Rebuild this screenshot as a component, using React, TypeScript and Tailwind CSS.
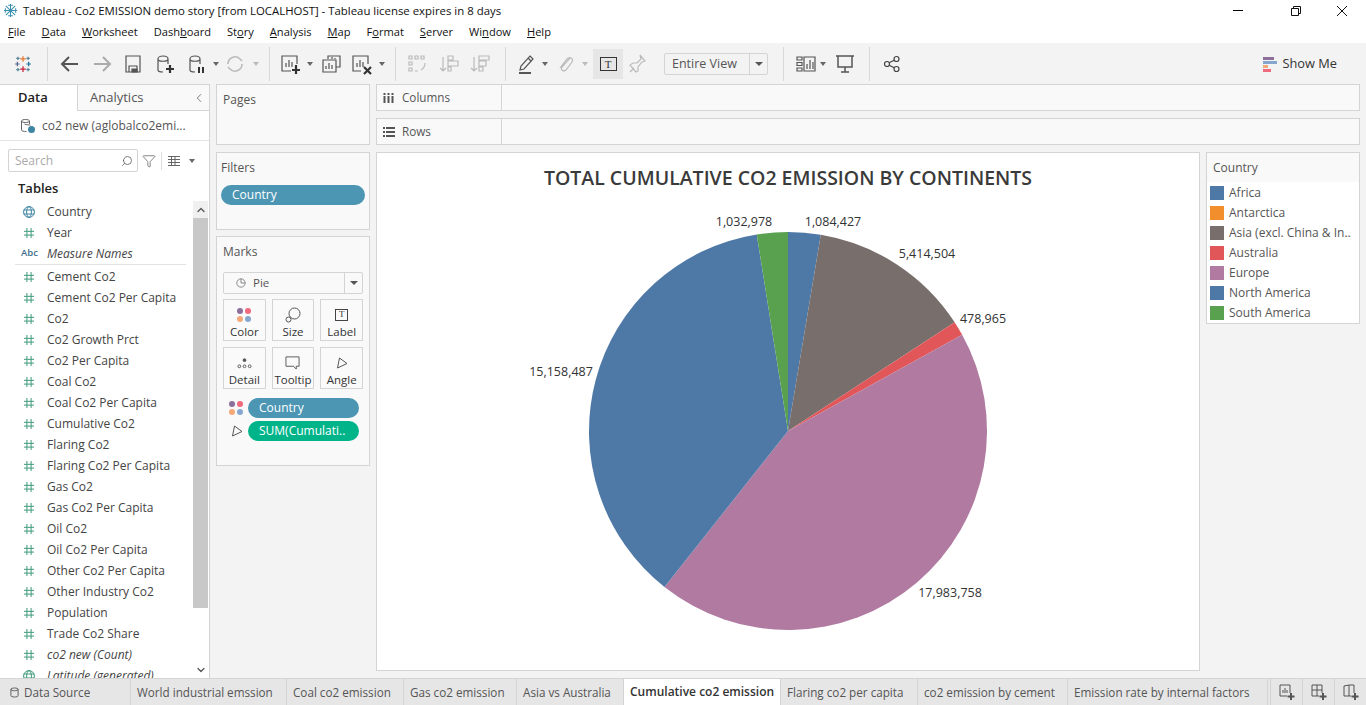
import React from 'react';
import { ChevronLeft, ChevronUp, ChevronDown, Search, Filter } from 'lucide-react';

const FONT = "font-['Open_Sans','Noto_Sans',sans-serif]";

const fields = [
  { name: 'Country', type: 'globe' },
  { name: 'Year', type: 'num' },
  { name: 'Measure Names', type: 'abc', italic: true },
  { divider: true },
  { name: 'Cement Co2', type: 'num' },
  { name: 'Cement Co2 Per Capita', type: 'num' },
  { name: 'Co2', type: 'num' },
  { name: 'Co2 Growth Prct', type: 'num' },
  { name: 'Co2 Per Capita', type: 'num' },
  { name: 'Coal Co2', type: 'num' },
  { name: 'Coal Co2 Per Capita', type: 'num' },
  { name: 'Cumulative Co2', type: 'num' },
  { name: 'Flaring Co2', type: 'num' },
  { name: 'Flaring Co2 Per Capita', type: 'num' },
  { name: 'Gas Co2', type: 'num' },
  { name: 'Gas Co2 Per Capita', type: 'num' },
  { name: 'Oil Co2', type: 'num' },
  { name: 'Oil Co2 Per Capita', type: 'num' },
  { name: 'Other Co2 Per Capita', type: 'num' },
  { name: 'Other Industry Co2', type: 'num' },
  { name: 'Population', type: 'num' },
  { name: 'Trade Co2 Share', type: 'num' },
  { name: 'co2 new (Count)', type: 'num', italic: true },
  { name: 'Latitude (generated)', type: 'globe', italic: true },
];

const legend = [
  { name: 'Africa', color: 'bg-[#4e79a7]' },
  { name: 'Antarctica', color: 'bg-[#f28e2b]' },
  { name: 'Asia (excl. China & In..', color: 'bg-[#786e6b]' },
  { name: 'Australia', color: 'bg-[#e15759]' },
  { name: 'Europe', color: 'bg-[#b07aa1]' },
  { name: 'North America', color: 'bg-[#4e79a7]' },
  { name: 'South America', color: 'bg-[#59a14f]' },
];

const slices = [
  { value: 1084427, color: '#4e79a7' },
  { value: 5414504, color: '#786e6b' },
  { value: 478965, color: '#e15759' },
  { value: 17983758, color: '#b07aa1' },
  { value: 15158487, color: '#4e79a7' },
  { value: 1032978, color: '#59a14f' },
];

const labels = [
  { text: '1,032,978', x: 744, y: 226 },
  { text: '1,084,427', x: 833, y: 226 },
  { text: '5,414,504', x: 927, y: 258 },
  { text: '478,965', x: 983, y: 323 },
  { text: '15,158,487', x: 561, y: 376 },
  { text: '17,983,758', x: 950, y: 597 },
];

const tabs = [
  { name: 'World industrial emssion', w: 'w-[156px]' },
  { name: 'Coal co2 emission', w: 'w-[117px]' },
  { name: 'Gas co2 emission', w: 'w-[113px]' },
  { name: 'Asia vs Australia', w: 'w-[107px]' },
  { name: 'Cumulative co2 emission', w: 'w-[157px]', active: true },
  { name: 'Flaring co2 per capita', w: 'w-[137px]' },
  { name: 'co2 emission by cement', w: 'w-[150px]' },
  { name: 'Emission rate by internal factors', w: 'w-[200px]' },
];

function Pie() {
  const cx = 788 - 377;
  const cy = 431 - 153;
  const r = 199;
  const total = slices.reduce((s, x) => s + x.value, 0);
  let acc = 0;
  return (
    <svg className="absolute left-0 top-0" width="822" height="517" viewBox="0 0 822 517">
      {slices.map((s, i) => {
        const a0 = (acc / total) * Math.PI * 2;
        acc += s.value;
        const a1 = (acc / total) * Math.PI * 2;
        const large = a1 - a0 > Math.PI ? 1 : 0;
        const d = `M${cx} ${cy}L${cx + r * Math.sin(a0)} ${cy - r * Math.cos(a0)}A${r} ${r} 0 ${large} 1 ${cx + r * Math.sin(a1)} ${cy - r * Math.cos(a1)}Z`;
        return <path key={i} d={d} fill={s.color} />;
      })}
      {labels.map((l) => (
        <text key={l.text} x={l.x - 377} y={l.y - 153} textAnchor="middle" fontSize="12.5" fill="#333">
          {l.text}
        </text>
      ))}
    </svg>
  );
}

function Ic({ children, className = '', stroke = '#555' }: { children: React.ReactNode; className?: string; stroke?: string }) {
  return (
    <svg viewBox="0 0 24 24" fill="none" stroke={stroke} strokeWidth="1.2" className={`w-6 h-6 shrink-0 ${className}`}>
      {children}
    </svg>
  );
}

function Caret({ className = '', light = false }: { className?: string; light?: boolean }) {
  return (
    <span className={`w-2 h-6 shrink-0 flex items-center justify-center ${className}`}>
      <span className={`w-0 h-0 border-l-[3.5px] border-r-[3.5px] border-t-[4px] border-l-transparent border-r-transparent ${light ? 'border-t-[#bbb]' : 'border-t-[#666]'}`} />
    </span>
  );
}

function Sep({ className = '' }: { className?: string }) {
  return <span className={`w-px h-[34px] bg-[#d8d8d8] shrink-0 ${className}`} />;
}

function Hash() {
  return (
    <svg viewBox="0 0 12 12" className="w-[10px] h-[10px]" stroke="#3f9a7c" strokeWidth="1.2" fill="none">
      <path d="M3.5 0v12M8.5 0v12M0 4h12M0 8.5h12" />
    </svg>
  );
}

function Globe({ color = '#3f85a3' }: { color?: string }) {
  return (
    <svg viewBox="0 0 12 12" className="w-3 h-3 -ml-px" stroke={color} strokeWidth="1" fill="none">
      <circle cx="6" cy="6" r="5.4" />
      <ellipse cx="6" cy="6" rx="2.4" ry="5.4" />
      <path d="M.6 4h10.8M.6 8h10.8" />
    </svg>
  );
}

function Dots({ className = '' }: { className?: string }) {
  return (
    <span className={`grid grid-cols-2 gap-[2px] w-[14px] shrink-0 ${className}`}>
      <span className="w-[6px] h-[6px] rounded-full bg-[#8d6f9c]" />
      <span className="w-[6px] h-[6px] rounded-full bg-[#f0697c]" />
      <span className="w-[6px] h-[6px] rounded-full bg-[#f5a878]" />
      <span className="w-[6px] h-[6px] rounded-full bg-[#86a6ce]" />
    </span>
  );
}

function AnglePointer({ className = '' }: { className?: string }) {
  return (
    <svg viewBox="0 0 12 12" className={`w-3 h-3 shrink-0 ${className}`} stroke="#555" strokeWidth="1" fill="none">
      <path d="M3.500 1 11 6.500 1.500 11Z" />
    </svg>
  );
}

function MarkBtn({ label, children }: { label: string; children: React.ReactNode }) {
  return (
    <div className="h-[42px] border border-[#d4d4d4] flex flex-col items-center pt-[5px] bg-[#fafafa]">
      <div className="h-[19px] flex items-center justify-center">{children}</div>
      <span className="text-[11.5px] leading-[16px] text-[#333]">{label}</span>
    </div>
  );
}

function Panel({ title, className = '', children }: { title: string; className?: string; children?: React.ReactNode }) {
  return (
    <div className={`border border-[#d4d4d4] bg-[#f9f9f9] px-[6px] ${className}`}>
      <div className="text-[12px] leading-[16px] text-[#555] mt-[7px]">{title}</div>
      {children}
    </div>
  );
}

function Shelf({ label, icon }: { label: string; icon: React.ReactNode }) {
  return (
    <div className="h-[27px] border border-[#d4d4d4] bg-[#f9f9f9] flex items-center">
      <div className="w-[125px] h-full border-r border-[#d4d4d4] flex items-center pl-[6px] gap-[7px] text-[11.7px] text-[#555]">
        {icon}
        {label}
      </div>
    </div>
  );
}

export default function App() {
  return (
    <div className={`h-screen w-full overflow-hidden flex flex-col bg-[#f3f3f3] ${FONT}`}>
      {/* title bar */}
      <div className="h-[21px] bg-white flex items-center shrink-0 relative">
        <svg viewBox="0 0 16 16" className="w-[15px] h-[15px] ml-[3px]" stroke="#3a8fb0" strokeWidth="1.1" fill="none">
          <path d="M8 1v14M1 8h14M3 3l10 10M13 3 3 13M5.5 2.5h5M5.5 13.5h5M2.5 5.5v5M13.5 5.5v5" />
        </svg>
        <span className="ml-[5px] text-[11.4px] text-[#111]">Tableau - Co2 EMISSION demo story [from LOCALHOST] - Tableau license expires in 8 days</span>
        <div className="ml-auto flex items-center">
          <span className="w-[46px] flex justify-center"><span className="w-[10px] h-px bg-black" /></span>
          <svg viewBox="0 0 10 10" className="w-[10px] h-[10px] ml-[30px]" stroke="#111" fill="none"><path d="M.5 2.500h7v7h-7zM2.500 2.500v-2h7v7h-2" /></svg>
          <svg viewBox="0 0 10 10" className="w-[10px] h-[10px] ml-[36px] mr-[19px]" stroke="#111" fill="none"><path d="M0 0l10 10M10 0 0 10" /></svg>
        </div>
      </div>

      {/* menu bar */}
      <div className="h-[22px] bg-white flex items-center shrink-0 text-[11.1px] text-[#111] pl-[8px] gap-[16px]">
        <span><u>F</u>ile</span>
        <span><u>D</u>ata</span>
        <span><u>W</u>orksheet</span>
        <span>Dash<u>b</u>oard</span>
        <span>St<u>o</u>ry</span>
        <span><u>A</u>nalysis</span>
        <span><u>M</u>ap</span>
        <span>F<u>o</u>rmat</span>
        <span><u>S</u>erver</span>
        <span>Wi<u>n</u>dow</span>
        <span><u>H</u>elp</span>
      </div>

      {/* toolbar */}
      <div className="h-[41px] flex items-center shrink-0 pt-px">
        <svg viewBox="0 0 16 16" className="w-[18px] h-[18px] ml-[14px] mr-[15px]" strokeWidth="1.1" fill="none">
          <path d="M8 1v5M5.500 3.500h5" stroke="#e8762d" />
          <path d="M8 10v5M5.500 12.500h5" stroke="#c72037" />
          <path d="M3 6v4M1 8h4" stroke="#5b6591" />
          <path d="M13 6v4M11 8h4" stroke="#1f749e" />
          <path d="M3.500 1.500v3M2 3h3M12.500 1.500v3M11 3h3M3.500 11.500v3M2 13h3M12.500 11.500v3M11 13h3" stroke="#59879b" />
        </svg>
        <Sep />
        <Ic className="ml-[10px]" stroke="#555"><path d="M20 12H4M11 5l-7 7 7 7" strokeWidth="2" /></Ic>
        <Ic className="ml-2" stroke="#aaa"><path d="M4 12h16M13 5l7 7-7 7" strokeWidth="2" /></Ic>
        <Ic className="ml-[7px]"><path d="M5 4h14v16H5zM8 20v-6h8v6" /><path d="M11 17h5v3h-5z" fill="#555" /></Ic>
        <Ic className="ml-2"><path d="M5 7c0-4 10-4 10 0v5M5 7c0 3 10 3 10 0M5 7v11c0 1 2 2 5 2" /><path d="M17 13v8M13 17h8" strokeWidth="2.2" stroke="#333" /></Ic>
        <Ic className="ml-[7px]"><path d="M6 7c0-4 10-4 10 0v5M6 7c0 3 10 3 10 0M6 7v11c0 1 2 2 5 2" /><path d="M15 15v6M19 15v6" strokeWidth="2" stroke="#333" /></Ic>
        <Caret className="ml-1" />
        <Ic className="ml-[3px]" stroke="#bbb"><path d="M5 12a7 7 0 0 1 12-5l2 2M19 12a7 7 0 0 1-12 5l-2-2" strokeWidth="1.6" /></Ic>
        <Caret className="ml-[5px]" light />
        <Sep className="ml-[9px]" />
        <Ic className="ml-2"><path d="M19 12V4H4v15h9M8 15v-4M11 15V8M14 15v-5" /><path d="M18 13v9M14 18h8" strokeWidth="2.2" stroke="#333" /></Ic>
        <Caret className="ml-1" />
        <Ic className="ml-[5px]"><path d="M9 7V4h12v11h-4M4 8h13v12H4zM7 17v-3M10 17v-6M13 17v-4M13 7V5M16 7V6" /></Ic>
        <Ic className="ml-[6px]"><path d="M19 12V4H4v15h8M8 15v-4M11 15V8M14 15v-5" /><path d="m15 15 7 7M22 15l-7 7" strokeWidth="2.2" stroke="#333" /></Ic>
        <Caret className="ml-[5px]" />
        <Sep className="ml-[9px]" />
        <Ic className="ml-[9px]" stroke="#bbb"><path d="M4 4h3v3H4zM10 4h3v3h-3zM16 4h3v3h-3zM4 10h3v3H4zM4 16h3v3H4zM10 19h3M20 11a8 8 0 0 1-4 7" /></Ic>
        <Ic className="ml-[9px]" stroke="#bbb"><path d="M5 5v14M2 16l3 3 3-3M10 4h5v4h-5zM10 9h10v5H10zM10 15h3v4h-3z" /></Ic>
        <Ic className="ml-[7px]" stroke="#bbb"><path d="M5 5v14M2 16l3 3 3-3M10 4h10v4H10zM10 9h7v5h-7zM10 15h4v4h-4z" /></Ic>
        <Sep className="ml-3" />
        <Ic className="ml-[9px]"><path d="M15 4l3 3-9 10-4 1 1-4zM13 6l3 3" /><path d="M4 21h12" strokeWidth="2" stroke="#555" /></Ic>
        <Caret className="ml-[2px]" />
        <Ic className="ml-1" stroke="#bbb"><path d="M17 6 9 15c-2 3 2 5 4 3l6-8c2-3-2-6-5-3l-7 9" /></Ic>
        <Caret className="ml-1" light />
        <span className="ml-1 w-[30px] h-[30px] bg-[#e6e6e6] flex items-center justify-center shrink-0">
          <span className="w-[17px] h-[14px] border border-[#333] flex items-center justify-center font-['Liberation_Serif',serif] text-[11px] leading-none text-[#333]">T</span>
        </span>
        <Ic className="ml-[2px]" stroke="#bbb"><path d="M15 3l5 6-3 1-4 5v4l-2 1-6-7 3-2 4 0 4-4zM9 16l-4 4" /></Ic>
        <div className="ml-[15px] w-[104px] h-[22px] border border-[#d4d4d4] rounded-[2px] flex items-center shrink-0">
          <span className="flex-1 pl-[7px] text-[12.5px] text-[#555]">Entire View</span>
          <span className="w-[18px] h-full border-l border-[#d4d4d4] flex items-center justify-center">
            <span className="w-0 h-0 border-l-[4px] border-r-[4px] border-t-[4px] border-l-transparent border-r-transparent border-t-[#555]" />
          </span>
        </div>
        <Sep className="ml-[15px]" />
        <Ic className="ml-[10px]"><path d="M3 5h5v3H3zM3 10.500h5v3H3zM3 16h5v3H3zM10 5h11v14H10zM13 17v-5M16 17V8M19 17v-7" /></Ic>
        <Caret className="ml-px" />
        <Ic className="ml-[6px]"><path d="M3 4h18M5 4v11h14V4M12 15v5M8 20h8" strokeWidth="1.5" /></Ic>
        <Sep className="ml-3" />
        <Ic className="ml-[10px]" stroke="#444"><circle cx="7" cy="12" r="2.500" /><circle cx="16.500" cy="7" r="2.500" /><circle cx="16.500" cy="17" r="2.500" /><path d="m9.200 10.800 5-2.600M9.200 13.200l5 2.600" /></Ic>
        <div className="ml-auto mr-[29px] flex items-center gap-[6px]">
          <span className="flex flex-col gap-px w-[14px]">
            <span className="h-[3px] w-[11px] bg-[#8d6f9c]" />
            <span className="h-[3px] w-[14px] bg-[#86a6ce]" />
            <span className="h-[3px] w-[5px] bg-[#f5a878]" />
            <span className="h-[3px] w-[8px] bg-[#f0697c]" />
          </span>
          <span className="text-[12.8px] text-[#333]">Show Me</span>
        </div>
      </div>

      {/* main */}
      <div className="flex-1 min-h-0 flex">
        {/* data pane */}
        <div className="w-[210px] shrink-0 bg-white border-t border-r border-[#d4d4d4] flex flex-col">
          <div className="h-[26px] flex shrink-0">
            <div className="w-[77px] flex items-center pl-[18px] text-[13px] font-semibold text-[#222]">Data</div>
            <div className="flex-1 flex items-center pl-[12px] border-l border-b border-[#d4d4d4] bg-[#f9f9f9] text-[13px] text-[#555]">
              Analytics
              <ChevronLeft size={14} strokeWidth={1.5} className="ml-auto mr-[3px] text-[#666]" />
            </div>
          </div>
          <div className="h-[30px] flex items-center border-b border-[#e3e3e3] shrink-0 pl-[20px] gap-[6px]">
            <svg viewBox="0 0 16 16" className="w-4 h-4 shrink-0" stroke="#666" fill="none">
              <path d="M1.500 3c0-2 8-2 8 0v3M1.500 3c0 2 8 2 8 0M1.500 3v9c0 1 2 1.500 5 1.500M4.500 6c2 1 5 1 6 1" />
              <circle cx="11.500" cy="11.500" r="3.500" fill="#3f85a3" stroke="none" />
            </svg>
            <span className="text-[12px] text-[#555]">co2 new (aglobalco2emi...</span>
          </div>
          <div className="h-[36px] flex items-center shrink-0 pl-[8px] pt-[3px]">
            <div className="w-[130px] h-[23px] border border-[#d4d4d4] rounded-[2px] flex items-center pl-[6px] pr-[4px]">
              <span className="text-[12px] text-[#aaa]">Search</span>
              <Search size={12} strokeWidth={1.5} className="ml-auto text-[#555] -scale-x-100" />
            </div>
            <Filter size={14} strokeWidth={1.2} className="ml-[4px] text-[#555]" />
            <span className="w-px h-[18px] bg-[#ddd] ml-[5px]" />
            <svg viewBox="0 0 12 10" className="w-3 h-[10px] ml-[6px]" stroke="#666" strokeWidth="1" fill="none"><path d="M0 .5h12M0 3.500h12M0 6.500h12M0 9.500h12M3.500 0v10M7 0v10" /></svg>
            <span className="ml-[9px] w-0 h-0 border-l-[3.500px] border-r-[3.500px] border-t-[4px] border-l-transparent border-r-transparent border-t-[#666]" />
          </div>
          <div className="h-[24px] flex items-center pl-[18px] text-[13px] font-semibold text-[#222] shrink-0">Tables</div>
          <div className="flex-1 min-h-0 flex">
            <div className="flex-1 min-w-0 overflow-hidden pl-[15px]">
              {fields.map((f, i) =>
                f.divider ? (
                  <div key={i} className="h-px bg-[#e3e3e3] mr-[7px] mb-px" />
                ) : (
                  <div key={i} className="h-[21px] flex items-center text-[12px] text-[#444]">
                    <span className="w-[32px] shrink-0 flex justify-start pl-[9px]">
                      {f.type === 'num' && <Hash />}
                      {f.type === 'globe' && <Globe color={f.italic ? '#3f9a7c' : '#3f85a3'} />}
                      {f.type === 'abc' && <span className="text-[9.5px] font-semibold -ml-[3px] text-[#3f6f8f]">Abc</span>}
                    </span>
                    <span className={f.italic ? 'italic whitespace-nowrap' : 'whitespace-nowrap'}>{f.name}</span>
                  </div>
                ),
              )}
            </div>
            <div className="w-[15px] mr-px shrink-0 flex flex-col">
              <div className="h-[17px] bg-[#f0f0f0] flex items-center justify-center"><ChevronUp size={12} strokeWidth={2.5} className="text-[#555]" /></div>
              <div className="h-[390px] bg-[#c8c8c8]" />
              <div className="flex-1" />
              <div className="h-[17px] flex items-center justify-center"><ChevronDown size={12} strokeWidth={2.5} className="text-[#555]" /></div>
            </div>
          </div>
        </div>

        {/* shelves column */}
        <div className="w-[154px] ml-[6px] shrink-0 flex flex-col gap-[6px]">
          <Panel title="Pages" className="h-[61px] mb-px" />
          <Panel title="Filters" className="h-[78px] !px-[4px]">
            <div className="h-[20px] mt-[9px] rounded-full bg-[#4c96b4] text-white text-[12px] leading-[20px] pl-[11px]">Country</div>
          </Panel>
          <Panel title="Marks" className="h-[230px]">
            <div className="mt-[12px] h-[22px] border border-[#d4d4d4] rounded-[2px] flex items-center">
              <svg viewBox="0 0 12 12" className="w-[10px] h-[10px] ml-[12px]" stroke="#777" fill="none"><circle cx="6" cy="6" r="5" /><path d="M6 1v5h5" /></svg>
              <span className="ml-[7px] text-[11.5px] text-[#555]">Pie</span>
              <span className="ml-auto w-[18px] h-full border-l border-[#d4d4d4] flex items-center justify-center">
                <span className="w-0 h-0 border-l-[4px] border-r-[4px] border-t-[4px] border-l-transparent border-r-transparent border-t-[#555]" />
              </span>
            </div>
            <div className="grid grid-cols-3 gap-x-[6px] gap-y-[6px] mt-[5px]">
              <MarkBtn label="Color"><Dots /></MarkBtn>
              <MarkBtn label="Size">
                <svg viewBox="0 0 16 16" className="w-4 h-4" stroke="#555" fill="none"><circle cx="9.500" cy="6.500" r="5.500" /><circle cx="3.500" cy="12.500" r="2.500" fill="#fafafa" /></svg>
              </MarkBtn>
              <MarkBtn label="Label">
                <span className="w-[13px] h-[12px] border border-[#444] flex items-center justify-center font-['Liberation_Serif',serif] text-[9px] leading-none text-[#333]">T</span>
              </MarkBtn>
              <MarkBtn label="Detail">
                <svg viewBox="0 0 16 12" className="w-[15px] h-[12px]" stroke="#555" fill="none"><circle cx="8" cy="3" r="1.500" fill="#555" /><circle cx="2.500" cy="9.500" r="1.500" /><circle cx="8" cy="9.500" r="1.500" /><circle cx="13.500" cy="9.500" r="1.500" /></svg>
              </MarkBtn>
              <MarkBtn label="Tooltip">
                <svg viewBox="0 0 16 16" className="w-[15px] h-[15px]" stroke="#555" fill="none"><path d="M1 2h14v10h-3v3l-3-3H1z" /></svg>
              </MarkBtn>
              <MarkBtn label="Angle"><AnglePointer /></MarkBtn>
            </div>
            <div className="mt-[9px] flex items-center h-[20px] pl-[6px]">
              <Dots />
              <span className="ml-[5px] flex-1 mr-[4px] h-[20px] rounded-full bg-[#4c96b4] text-white text-[12px] leading-[20px] pl-[11px]">Country</span>
            </div>
            <div className="mt-[3px] flex items-center h-[20px] pl-[8px]">
              <AnglePointer />
              <span className="ml-[5px] flex-1 mr-[4px] h-[20px] rounded-full bg-[#00b48a] text-white text-[12px] leading-[20px] pl-[11px] whitespace-nowrap">SUM(Cumulati..</span>
            </div>
          </Panel>
        </div>

        {/* sheet */}
        <div className="flex-1 min-w-0 ml-[6px] mr-[6px] flex flex-col">
          <Shelf
            label="Columns"
            icon={<svg viewBox="0 0 10 10" className="w-[11px] h-[10px] mr-px" fill="#555"><path d="M0 0h2v2H0zM4 0h2v2H4zM8 0h2v2H8zM0 3h2v7H0zM4 3h2v7H4zM8 3h2v7H8z" /></svg>}
          />
          <div className="h-[7px]" />
          <Shelf
            label="Rows"
            icon={<svg viewBox="0 0 12 10" className="w-3 h-[10px]" fill="#555"><path d="M0 0h2v2H0zM0 4h2v2H0zM0 8h2v2H0zM3 0h9v2H3zM3 4h9v2H3zM3 8h9v2H3z" /></svg>}
          />
          <div className="mt-[7px] flex gap-[6px] items-start">
            <div className="w-[824px] h-[519px] bg-white border border-[#d4d4d4] shrink-0 relative">
              <div className="text-center text-[19.5px] leading-[26px] font-semibold text-[#3a3a3a] pt-[12px] whitespace-nowrap">TOTAL CUMULATIVE CO2 EMISSION BY CONTINENTS</div>
              <Pie />
            </div>
            <div className="flex-1 h-[172px] border border-[#d4d4d4] bg-white">
              <div className="h-[29px] bg-[#f9f9f9] flex items-center pl-[6px] text-[12px] text-[#555]">Country</div>
              <div className="pl-[3px] pt-px">
                {legend.map((l) => (
                  <div key={l.name} className="h-[20px] flex items-center gap-[5px] text-[12px] text-[#555] whitespace-nowrap">
                    <span className={`w-[14px] h-[14px] shrink-0 ${l.color}`} />
                    {l.name}
                  </div>
                ))}
              </div>
            </div>
          </div>
        </div>
      </div>

      {/* sheet tabs */}
      <div className="h-[27px] shrink-0 bg-[#e6e6e6] border-t border-[#d4d4d4] flex text-[11.7px] text-[#555]">
        <div className="w-[131px] shrink-0 flex items-center pl-[10px] pt-px gap-[5px] border-r border-[#d4d4d4]">
          <svg viewBox="0 0 10 12" className="w-[9px] h-[11px]" stroke="#555" fill="none"><path d="M1 2.500c0-2 8-2 8 0v7c0 2-8 2-8 0zM1 2.500c0 2 8 2 8 0" /></svg>
          Data Source
        </div>
        {tabs.map((t) => (
          <div
            key={t.name}
            className={`${t.w} shrink-0 flex items-center pl-[6px] border-r border-[#d4d4d4] whitespace-nowrap ${t.active ? 'bg-white font-semibold text-[#333] text-[12px]' : 'pt-px'}`}
          >
            {t.name}
          </div>
        ))}
        <div className="w-[3px] border-r border-[#d4d4d4] shrink-0" />
        <div className="flex-1 flex">
          <div className="flex-1 flex items-center justify-center border-r border-[#d4d4d4]">
            <svg viewBox="0 0 16 16" className="w-4 h-4" stroke="#555" fill="none"><path d="M11 9V1H1v11h7M4 9V6M6 9V4M8 9V6" /><path d="M12 9v7M8.500 12.500h7" strokeWidth="2" /></svg>
          </div>
          <div className="flex-1 flex items-center justify-center border-r border-[#d4d4d4]">
            <svg viewBox="0 0 16 16" className="w-4 h-4" stroke="#555" fill="none"><path d="M11 9V1H1v11h7M6 1v11M1 6h10" /><path d="M12 9v7M8.500 12.500h7" strokeWidth="2" /></svg>
          </div>
          <div className="flex-1 flex items-center justify-center">
            <svg viewBox="0 0 16 16" className="w-4 h-4" stroke="#555" fill="none"><path d="M11 9V1H6L1 2v10h7M6 1v11" /><path d="M12 9v7M8.500 12.500h7" strokeWidth="2" /></svg>
          </div>
        </div>
      </div>
    </div>
  );
}
